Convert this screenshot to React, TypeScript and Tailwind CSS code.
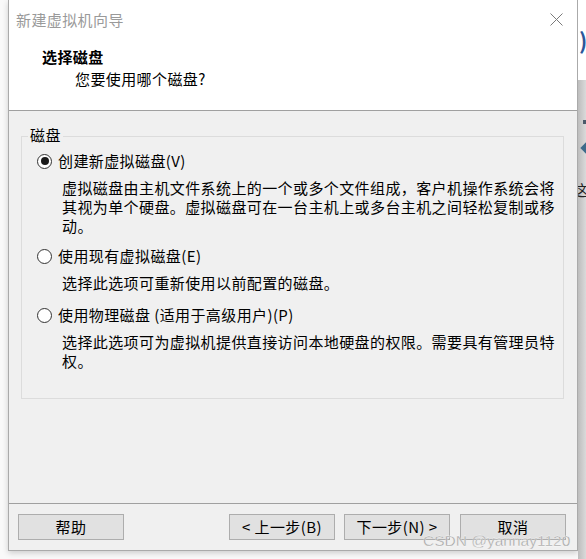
const FONT = '"Noto Sans CJK SC", "Noto Sans", sans-serif';

function Radio({ checked }: { checked?: boolean }) {
  return (
    <span className="w-[15px] h-[15px] rounded-full border border-[#333333] bg-white flex items-center justify-center shrink-0">
      {checked && <span className="w-[8px] h-[8px] rounded-full bg-[#1a1a1a]" />}
    </span>
  );
}

function Option({
  label,
  lines,
  checked,
  className,
}: {
  label: string;
  lines: string[];
  checked?: boolean;
  className?: string;
}) {
  return (
    <div className={className}>
      <div className="flex items-center h-[20px] gap-[6px]">
        <Radio checked={checked} />
        <span className="leading-[20px]">{label}</span>
      </div>
      <div className="mt-[7px] pl-[25px] leading-[19px]">
        {lines.map((l) => (
          <div key={l}>{l}</div>
        ))}
      </div>
    </div>
  );
}

function Button({ label, className }: { label: string; className?: string }) {
  return (
    <div
      className={`w-[106px] h-[26px] bg-[#e1e1e1] border border-[#adadad] flex items-center justify-center leading-[20px] ${className ?? ''}`}
    >
      {label}
    </div>
  );
}

export default function App() {
  return (
    <div
      className="w-[586px] h-[559px] bg-[#f9f9f9] flex overflow-hidden relative text-[15px] tracking-[0.4px] text-black"
      style={{ fontFamily: FONT }}
    >
      <div className="w-[8px] shrink-0" />

      {/* Dialog */}
      <div className="w-[570px] h-[551px] shrink-0 flex flex-col border border-t-0 border-[#aaaaaa] bg-[#f0f0f0] shadow-[0_2px_6px_rgba(0,0,0,0.18)]">
        {/* Header */}
        <div className="h-[111px] shrink-0 bg-white border-b border-[#a0a0a0] pt-[10px] relative">
          <div className="pl-[7px] leading-[20px] text-[#9a9a9a]">新建虚拟机向导</div>
          <svg
            className="absolute left-[541px] top-[13px]"
            width="13"
            height="13"
            viewBox="0 0 13 13"
            fill="none"
            stroke="#7a7a7a"
            strokeWidth="1"
          >
            <path d="M0.5 0.5 L12.5 12.5 M12.5 0.5 L0.5 12.5" />
          </svg>
          <div className="pl-[33px] mt-[17px] leading-[20px] font-bold">选择磁盘</div>
          <div className="pl-[66px] mt-[2px] leading-[20px]">您要使用哪个磁盘?</div>
        </div>

        {/* Body */}
        <div className="flex-1 pt-[25px] pl-[12px] pr-[13px]">
          <div className="relative h-[263px] border border-[#dcdcdc] pt-[14px] pl-[15px]">
            <span className="absolute left-[6px] top-[-12px] px-[2px] leading-[20px] bg-[#f0f0f0]">磁盘</span>
            <Option
              checked
              label="创建新虚拟磁盘(V)"
              lines={[
                '虚拟磁盘由主机文件系统上的一个或多个文件组成，客户机操作系统会将',
                '其视为单个硬盘。虚拟磁盘可在一台主机上或多台主机之间轻松复制或移',
                '动。',
              ]}
            />
            <Option
              className="mt-[11px]"
              label="使用现有虚拟磁盘(E)"
              lines={['选择此选项可重新使用以前配置的磁盘。']}
            />
            <Option
              className="mt-[13px]"
              label="使用物理磁盘 (适用于高级用户)(P)"
              lines={[
                '选择此选项可为虚拟机提供直接访问本地硬盘的权限。需要具有管理员特',
                '权。',
              ]}
            />
          </div>
        </div>

        {/* Footer */}
        <div className="h-[47px] shrink-0 border-t border-[#a0a0a0] pt-[10px] pl-[9px] flex items-start">
          <Button label="帮助" />
          <Button label="< 上一步(B)" className="ml-[105px]" />
          <Button label="下一步(N) >" className="ml-[9px]" />
          <Button label="取消" className="ml-[10px]" />
        </div>
      </div>

      {/* Window behind, right edge */}
      <div className="flex-1 flex flex-col overflow-hidden">
        <div className="h-[80px] bg-white pt-[28px] pl-[1px]">
          <span className="block text-[22px] leading-[22px] font-bold text-[#2b579a]">)</span>
        </div>
        <div className="flex-1 bg-gradient-to-r from-[#bdbdbd] to-[#dadada] pt-[40px] pl-[5px]">
          <div className="w-[4px] h-[4px] bg-[#4a5a6a]" />
          <div className="mt-[20px] w-[8px] h-[8px] bg-[#3d6a8a] rotate-45 ml-[-1px]" />
          <div className="mt-[28px] ml-[-10px] leading-[20px] text-[#222]">这</div>
        </div>
      </div>

      {/* Watermark */}
      <div
        className="absolute left-[423px] top-[531px] text-[15.5px] leading-[20px] tracking-normal text-[#a0a0a0]"
        style={{ fontFamily: '"Liberation Sans", Arial, sans-serif', WebkitTextStroke: '0.3px #ffffff' }}
      >
        CSDN @yannay1120
      </div>
    </div>
  );
}
